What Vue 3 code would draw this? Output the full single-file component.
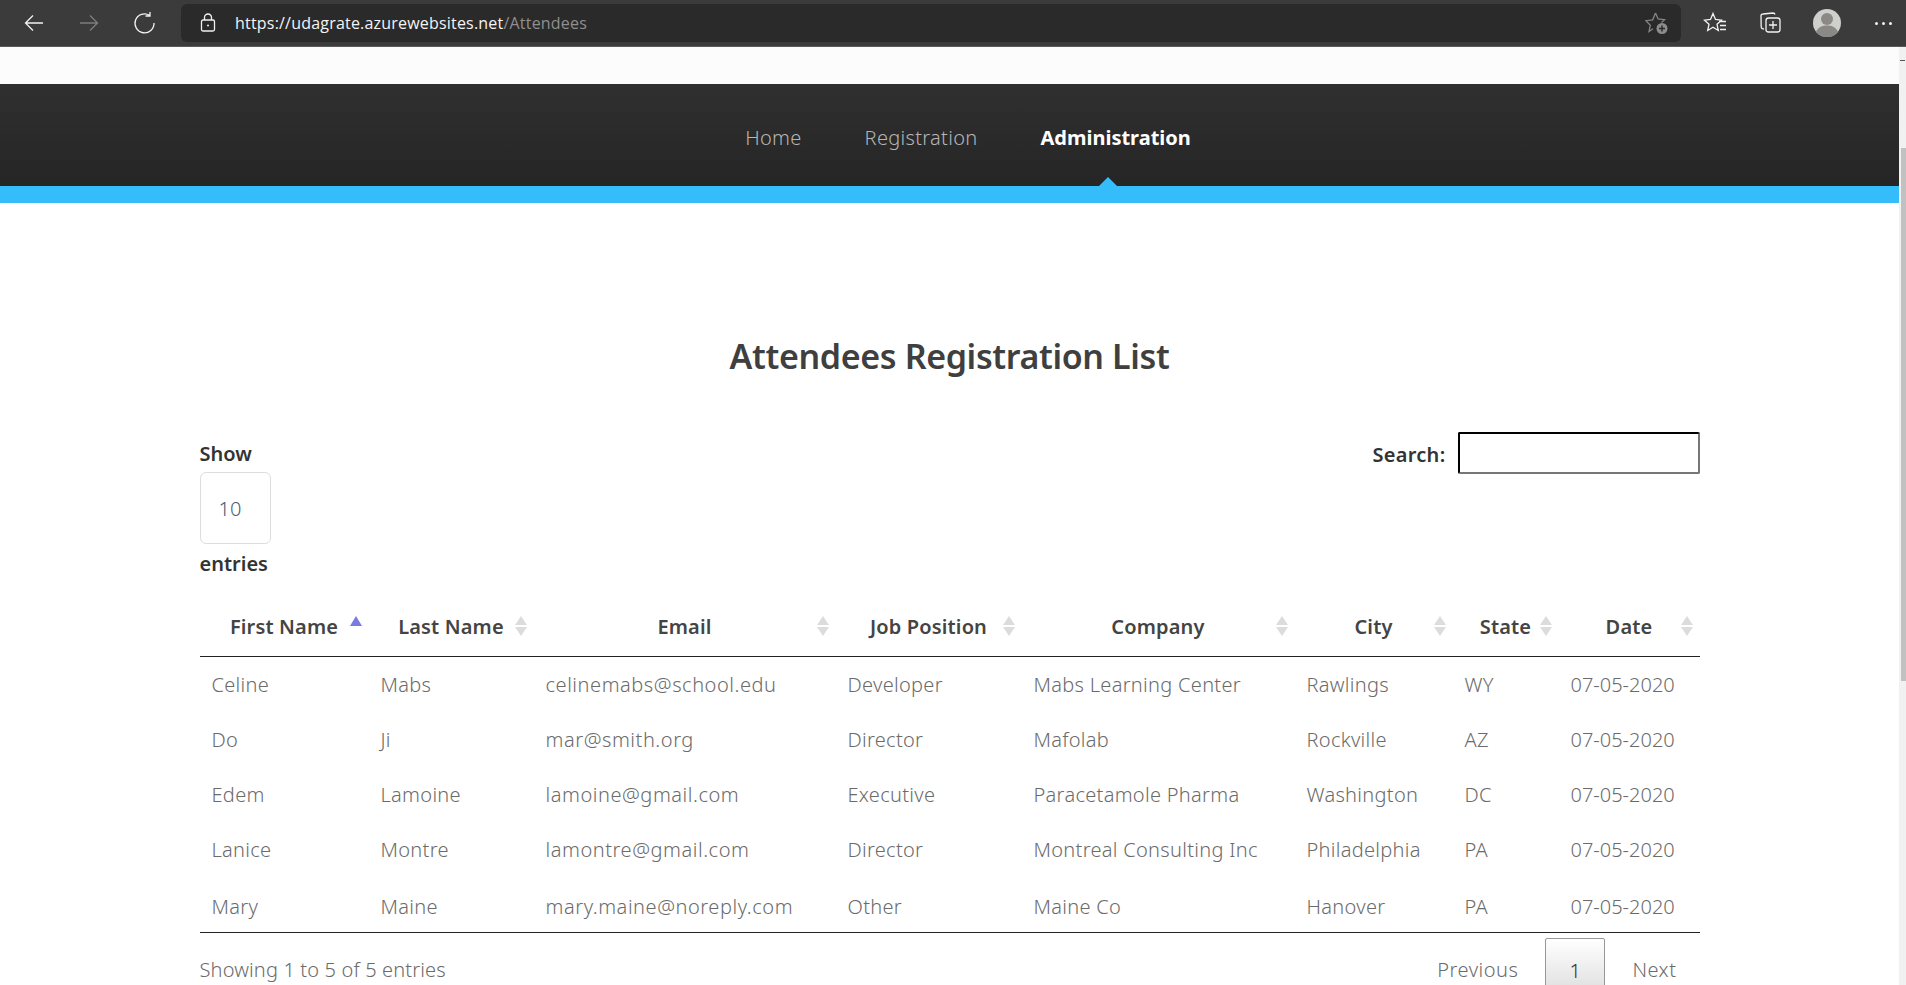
<template>
  <div class="window">
    <!-- browser toolbar -->
    <div class="toolbar">
      <button class="tool back">
        <svg width="24" height="24" viewBox="0 0 24 24"><path d="M21 12H3.500M11 4.500 3.500 12l7.500 7.500" /></svg>
      </button>
      <button class="tool forward">
        <svg width="24" height="24" viewBox="0 0 24 24"><path d="M3 12h17.500M13 4.500l7.500 7.500-7.500 7.500" /></svg>
      </button>
      <button class="tool reload">
        <svg width="24" height="24" viewBox="0 0 24 24"><path d="M16.500 4.300A9.500 9.500 0 1 0 21 12M17 1v4h-4.500" /></svg>
      </button>
      <div class="address">
        <svg class="lock" width="18" height="20" viewBox="0 0 18 20"><rect x="2.500" y="7" width="13" height="11" rx="1.500" /><path d="M5.500 7V4.500a3.500 3.500 0 0 1 7 0V7" /><circle cx="9" cy="12.500" r="1" class="dot" /></svg>
        <span class="url">https://udagrate.azurewebsites.net<span class="path">/Attendees</span></span>
        <svg class="fav-add" width="24" height="24" viewBox="0 0 24 24"><path d="M10.500 2l2.600 6 6.400.7-3 2.700M8 17.800l-4 2.700 1.300-6.200L.8 9.700l6.900-.9L10.500 2" /><circle cx="17" cy="17.500" r="5.500" class="fill" /><path d="M17 14.500v6M14 17.500h6" class="plus" /></svg>
      </div>
      <button class="tool right">
        <svg width="24" height="24" viewBox="0 0 24 24"><path d="M10 2.500l2.500 6 6 .7-4.500 4.100 1.300 6.200-5.300-3.200-5.300 3.200 1.300-6.200L1.500 9.200l6-.7zM16 10.500h7M17 14.500h6M17 18.500h6" /></svg>
      </button>
      <button class="tool right">
        <svg width="24" height="24" viewBox="0 0 24 24"><path d="M6 18l-1.200-.2c-1.100-.2-1.700-1-1.600-2L3 5c0-1.200 1-2 2-2l10-1c1 0 1.800.6 2 1.500" /><rect x="8" y="7" width="14" height="14" rx="2.500" /><path d="M15 10v8M11 14h8" /></svg>
      </button>
      <div class="avatar">
        <svg width="28" height="28" viewBox="0 0 28 28"><circle cx="14" cy="14" r="14" fill="#cfcfcb" /><circle cx="14" cy="10" r="6" fill="#8b8985" /><path d="M3 23c2-5 6-6.500 11-6.500S23 18 25 23a14 14 0 0 1-22 0z" fill="#8b8985" /></svg>
      </div>
      <div class="dots"><i></i><i></i><i></i></div>
    </div>

    <div class="viewport">
      <div class="page">
        <div class="top-band"></div>
        <nav class="navbar">
          <a v-for="link in links" :key="link.label" :class="{ active: link.active }">{{ link.label }}</a>
        </nav>
        <div class="blue-bar"><span class="caret"></span></div>

        <main class="content">
          <h1>Attendees Registration List</h1>

          <div class="controls">
            <div class="length">
              <label>Show</label>
              <div class="select">10</div>
              <label>entries</label>
            </div>
            <div class="search">
              <label>Search:</label>
              <input type="text" />
            </div>
          </div>

          <table>
            <colgroup>
              <col v-for="col in columns" :key="col.key" :class="col.key" />
            </colgroup>
            <thead>
              <tr>
                <th v-for="(col, i) in columns" :key="col.key">
                  {{ col.label }}
                  <span v-if="i === 0" class="sort asc"></span>
                  <span v-else class="sort both"></span>
                </th>
              </tr>
            </thead>
            <tbody>
              <tr v-for="row in attendees" :key="row.email">
                <td v-for="col in columns" :key="col.key">{{ row[col.key] }}</td>
              </tr>
            </tbody>
          </table>

          <div class="table-footer">
            <div class="info">Showing 1 to 5 of 5 entries</div>
            <div class="pager">
              <a>Previous</a>
              <a class="current">1</a>
              <a>Next</a>
            </div>
          </div>
        </main>
      </div>

      <div class="scrollbar">
        <span class="up"></span>
        <span class="thumb"></span>
      </div>
    </div>
  </div>
</template>

<script setup>
const links = [
  { label: 'Home' },
  { label: 'Registration' },
  { label: 'Administration', active: true },
];

const columns = [
  { key: 'first', label: 'First Name' },
  { key: 'last', label: 'Last Name' },
  { key: 'email', label: 'Email' },
  { key: 'job', label: 'Job Position' },
  { key: 'company', label: 'Company' },
  { key: 'city', label: 'City' },
  { key: 'state', label: 'State' },
  { key: 'date', label: 'Date' },
];

const attendees = [
  { first: 'Celine', last: 'Mabs', email: 'celinemabs@school.edu', job: 'Developer', company: 'Mabs Learning Center', city: 'Rawlings', state: 'WY', date: '07-05-2020' },
  { first: 'Do', last: 'Ji', email: 'mar@smith.org', job: 'Director', company: 'Mafolab', city: 'Rockville', state: 'AZ', date: '07-05-2020' },
  { first: 'Edem', last: 'Lamoine', email: 'lamoine@gmail.com', job: 'Executive', company: 'Paracetamole Pharma', city: 'Washington', state: 'DC', date: '07-05-2020' },
  { first: 'Lanice', last: 'Montre', email: 'lamontre@gmail.com', job: 'Director', company: 'Montreal Consulting Inc', city: 'Philadelphia', state: 'PA', date: '07-05-2020' },
  { first: 'Mary', last: 'Maine', email: 'mary.maine@noreply.com', job: 'Other', company: 'Maine Co', city: 'Hanover', state: 'PA', date: '07-05-2020' },
];
</script>

<style>
html,
body {
  margin: 0;
  overflow: hidden;
}
</style>

<style scoped>
.window {
  height: 985px;
  display: flex;
  flex-direction: column;
  overflow: hidden;
  font-family: "Noto Sans", Lato, sans-serif;
  background: #fff;
}

.toolbar {
  height: 46px;
  flex: none;
  display: flex;
  align-items: center;
  background: #3b3b3b;
  border-bottom: 1px solid #5a5a5a;
  padding-left: 22px;
}

.tool {
  width: 24px;
  height: 24px;
  padding: 0;
  border: none;
  background: none;
  margin-right: 31px;
}

.tool svg path,
.tool svg rect {
  fill: none;
  stroke: #f2f2f2;
  stroke-width: 1.3;
}

.tool.forward svg path {
  stroke: #7d7d7d;
}

.tool.reload {
  margin-right: 24px;
  margin-left: 1px;
}

.address {
  width: 1500px;
  height: 38px;
  margin-right: 22px;
  display: flex;
  align-items: center;
  background: #2a2a2a;
  border-radius: 6px;
  padding-left: 18px;
  box-sizing: border-box;
}

.lock {
  margin-right: 18px;
}

.lock rect,
.lock path {
  fill: none;
  stroke: #f0f0f0;
  stroke-width: 1.3;
}

.lock .dot {
  fill: #f0f0f0;
}

.url {
  font-family: "Open Sans", sans-serif;
  font-size: 16px;
  letter-spacing: 0.2px;
  color: #f4f4f4;
  flex: 1;
}

.path {
  color: #8f8f8f;
}

.fav-add {
  margin-right: 12px;
}

.fav-add path {
  fill: none;
  stroke: #858585;
  stroke-width: 1.3;
}

.fav-add .fill {
  fill: #8c8c8c;
}

.fav-add .plus {
  stroke: #2a2a2a;
  stroke-width: 1.5;
}

.avatar {
  width: 28px;
  height: 28px;
  margin-right: 34px;
}

.dots {
  display: flex;
  gap: 4px;
}

.dots i {
  width: 3px;
  height: 3px;
  border-radius: 50%;
  background: #f2f2f2;
}

.viewport {
  flex: 1;
  display: flex;
  min-height: 0;
}

.page {
  flex: 1;
  min-width: 0;
}

.top-band {
  height: 37px;
  background: #fcfcfc;
}

.navbar {
  height: 102px;
  display: flex;
  justify-content: center;
  align-items: center;
  gap: 63px;
  padding-left: 37px;
  padding-top: 4px;
  box-sizing: border-box;
  background: linear-gradient(#303030, #252525);
  font-size: 20px;
  font-weight: 300;
  letter-spacing: 0.3px;
  color: #b5b5b5;
}

.navbar a.active {
  color: #fff;
  font-weight: 700;
  letter-spacing: 0;
}

.blue-bar {
  height: 17px;
  background: #35bcfb;
  position: relative;
}

.caret {
  position: absolute;
  left: 1099px;
  top: -9px;
  border-left: 9px solid transparent;
  border-right: 9px solid transparent;
  border-bottom: 9px solid #35bcfb;
}

.content {
  width: 1500px;
  margin: 0 auto;
}

h1 {
  margin: 127px 0 0;
  height: 52px;
  line-height: 52px;
  text-align: center;
  font-size: 34px;
  font-weight: 600;
  letter-spacing: -0.36px;
  color: #3f3f3f;
}

.controls {
  display: flex;
  justify-content: space-between;
  margin-top: 50px;
  font-size: 20px;
  font-weight: 600;
  color: #333;
}

.length label {
  display: block;
  line-height: 28px;
}

.length label:first-child {
  margin-top: 8px;
}

.select {
  width: 71px;
  height: 72px;
  margin: 4px 0 6px;
  box-sizing: border-box;
  border: 1px solid #dddddd;
  border-radius: 6px;
  padding-left: 18px;
  line-height: 72px;
  font-weight: 300;
  color: #4a6078;
}

.search {
  display: flex;
  align-items: flex-start;
  gap: 12px;
}

.search label {
  line-height: 46px;
  letter-spacing: 0.3px;
}

.search input {
  width: 242px;
  height: 42px;
  box-sizing: border-box;
  border: 2px inset #777;
  border-top-color: #222;
  border-left-color: #222;
  border-radius: 2px;
  background: #fff;
}

table {
  width: 1500px;
  table-layout: fixed;
  border-collapse: collapse;
  margin-top: 23px;
}

col.first { width: 169px; }
col.last { width: 165px; }
col.email { width: 302px; }
col.job { width: 186px; }
col.company { width: 273px; }
col.city { width: 158px; }
col.state { width: 106px; }
col.date { width: 141px; }

thead tr {
  border-bottom: 1px solid #222;
}

th {
  position: relative;
  height: 55px;
  padding: 0 0 4px;
  box-sizing: border-box;
  text-align: center;
  font-size: 20px;
  font-weight: 600;
  letter-spacing: 0.15px;
  color: #444;
}

/* sort arrows sit over the header cell's right edge */
.sort {
  position: absolute;
  right: 7px;
  top: 15px;
  width: 0;
  height: 0;
  border-left: 6px solid transparent;
  border-right: 6px solid transparent;
}

.sort.asc {
  right: 7px;
  border-bottom: 10px solid #7b7bdf;
}

.sort.both {
  border-bottom: 9px solid #dcdcdc;
}

.sort.both::after {
  content: "";
  position: absolute;
  left: -6px;
  top: 11px;
  border-left: 6px solid transparent;
  border-right: 6px solid transparent;
  border-top: 9px solid #dcdcdc;
}

td {
  height: 55.2px;
  padding: 1px 0 0 12px;
  box-sizing: border-box;
  font-size: 20px;
  font-weight: 300;
  letter-spacing: 0.3px;
  color: #6b6b6b;
  white-space: nowrap;
  overflow: hidden;
}

td:nth-child(3) {
  letter-spacing: 0.55px;
}

td:last-child {
  letter-spacing: 0;
}

tbody tr:last-child {
  border-bottom: 1px solid #222;
}

tbody tr:last-child td {
  height: 56px;
  padding-top: 3px;
}

.table-footer {
  display: flex;
  justify-content: space-between;
  align-items: flex-start;
  font-size: 20px;
  font-weight: 300;
  color: #6b6b6b;
}

.info {
  padding-top: 23px;
  letter-spacing: 0.15px;
}

.pager {
  display: flex;
  align-items: flex-start;
  padding-top: 5px;
  padding-right: 23px;
  gap: 27px;
}

.pager a {
  padding-top: 18px;
  letter-spacing: 0.5px;
}

.pager a.current {
  width: 60px;
  height: 60px;
  box-sizing: border-box;
  border: 1px solid #979797;
  border-radius: 2px;
  text-align: center;
  color: #333;
  background: linear-gradient(#ffffff, #dcdcdc);
}

.scrollbar {
  width: 7px;
  flex: none;
  background: #f1f1f1;
  position: relative;
}

.up {
  position: absolute;
  left: 1px;
  top: 13px;
  width: 5px;
  height: 1px;
  background: #555;
}

.thumb {
  position: absolute;
  left: 2px;
  right: 0;
  top: 101px;
  height: 533px;
  background: #c1c1c1;
}
</style>
